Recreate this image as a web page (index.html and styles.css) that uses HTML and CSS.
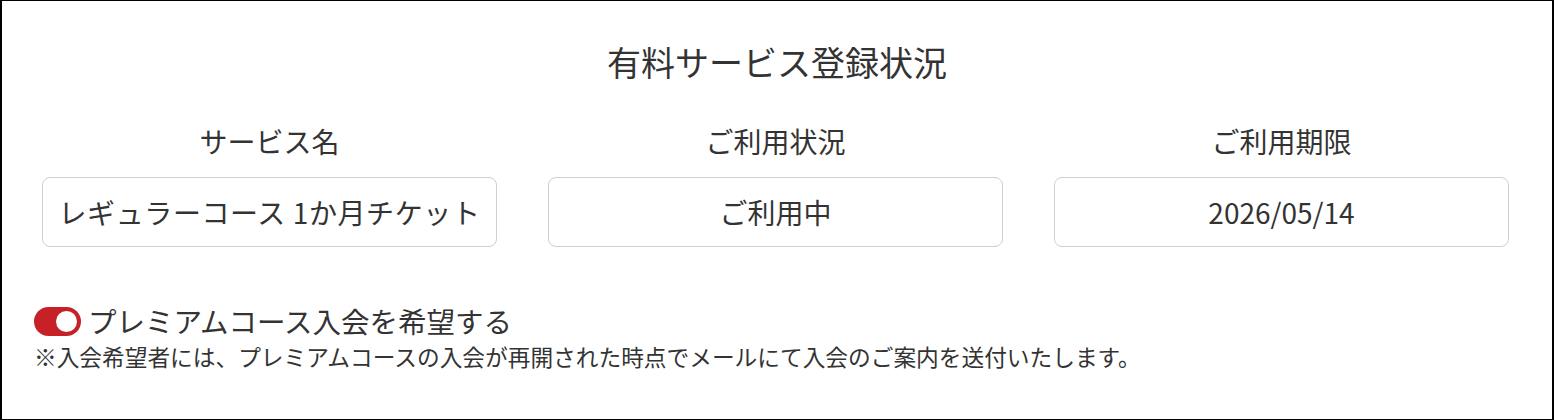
FILE: index.html
```html
<!DOCTYPE html>
<html lang="ja">
<head>
<meta charset="utf-8">
<title>有料サービス登録状況</title>
<link rel="stylesheet" href="styles.css">
</head>
<body>
<div class="panel">
  <h1 class="title">有料サービス登録状況</h1>
  <div class="grid">
    <div class="field">
      <div class="label">サービス名</div>
      <div class="box box-wide">レギュラーコース 1か月チケット</div>
    </div>
    <div class="field">
      <div class="label">ご利用状況</div>
      <div class="box">ご利用中</div>
    </div>
    <div class="field">
      <div class="label">ご利用期限</div>
      <div class="box">2026/05/14</div>
    </div>
  </div>
  <div class="opt">
    <label class="toggle-row">
      <span class="toggle"><span class="knob"></span></span>
      <span class="toggle-text">プレミアムコース入会を希望する</span>
    </label>
    <p class="note">※入会希望者には、プレミアムコースの入会が再開された時点でメールにて入会のご案内を送付いたします。</p>
  </div>
</div>
</body>
</html>
```

FILE: styles.css
```css
* { box-sizing: border-box; }
html, body { margin: 0; padding: 0; background: #fff; }
body {
  font-family: "Noto Sans CJK JP", "Noto Sans", sans-serif;
  color: #333;
}
.panel {
  width: 1554px;
  height: 420px;
  border: 1px solid #000;
  border-left-width: 2px;
  border-right-width: 2px;
  padding: 36px 0 0 0;
}
.title {
  margin: 0;
  font-size: 34px;
  line-height: 50px;
  font-weight: 400;
  text-align: center;
}
.grid {
  display: grid;
  grid-template-columns: repeat(3, 455px);
  column-gap: 51px;
  margin: 34px 0 0 40px;
}
.field { display: flex; flex-direction: column; align-items: stretch; }
.label {
  font-size: 28px;
  line-height: 40px;
  text-align: center;
}
.box {
  margin-top: 16px;
  height: 70px;
  border: 1px solid #cfcfcf;
  border-radius: 8px;
  display: flex;
  align-items: center;
  justify-content: center;
  font-size: 28px;
  white-space: nowrap;
}
.box-wide { letter-spacing: 0.6px; }
.opt { margin: 54px 0 0 32px; }
.toggle-row {
  display: flex;
  align-items: center;
  gap: 7px;
  height: 40px;
}
.toggle {
  width: 47px;
  height: 29px;
  border-radius: 15px;
  background: #c62127;
  display: flex;
  align-items: center;
  justify-content: flex-end;
  padding-right: 4px;
}
.knob {
  width: 21px;
  height: 21px;
  border-radius: 50%;
  background: #fff;
}
.toggle-text {
  font-size: 28.5px;
  line-height: 40px;
}
.note {
  margin: 0;
  font-size: 22.7px;
  line-height: 32px;
}
```
